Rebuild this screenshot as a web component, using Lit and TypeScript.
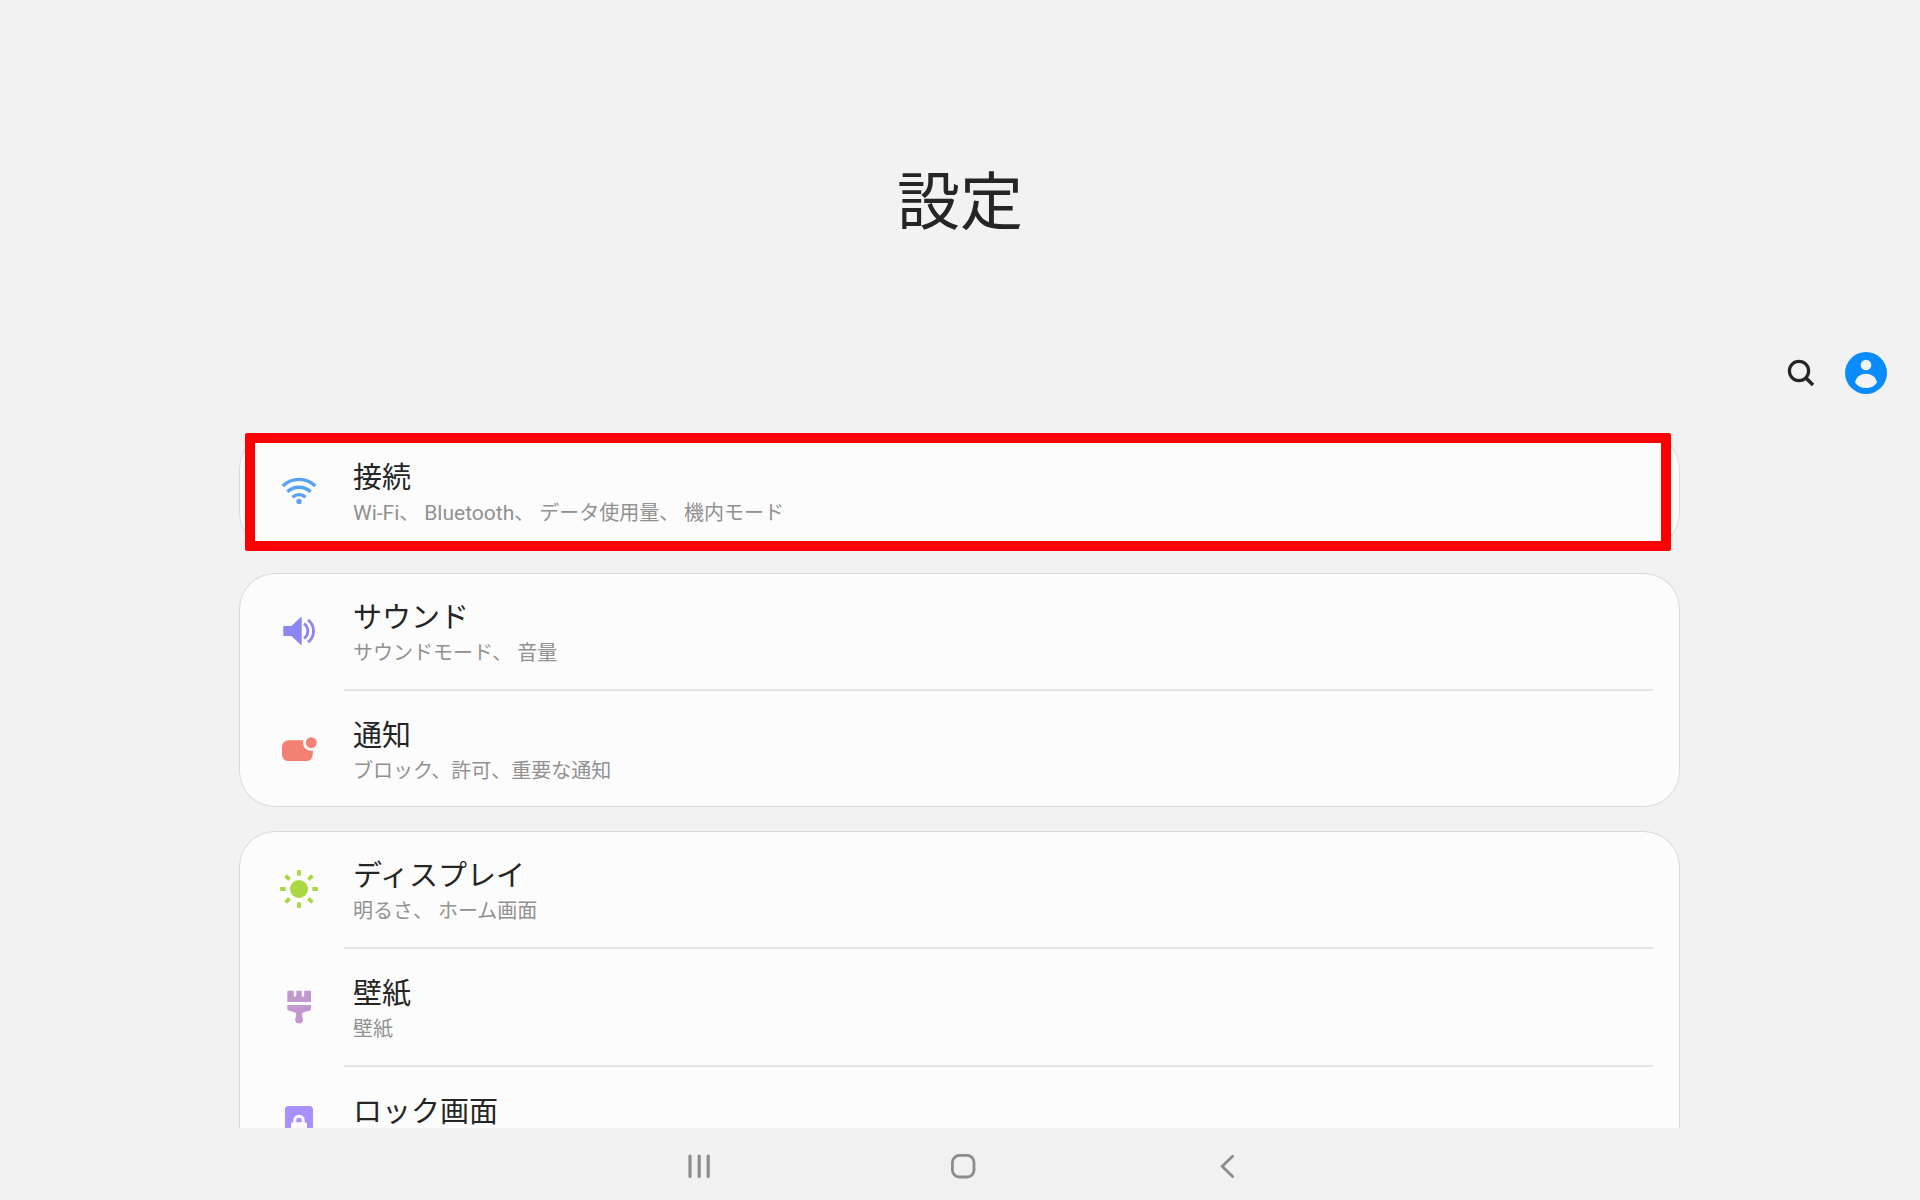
import { LitElement, html, css, svg, nothing } from "lit";
import { customElement, property } from "lit/decorators.js";

interface Item {
  id: string;
  title: string;
  detail: string;
}

interface Group {
  highlighted?: boolean;
  items: Item[];
}

const groups: Group[] = [
  {
    highlighted: true,
    items: [{ id: "wifi", title: "接続", detail: "Wi-Fi、 Bluetooth、 データ使用量、 機内モード" }],
  },
  {
    items: [
      { id: "sound", title: "サウンド", detail: "サウンドモード、 音量" },
      { id: "notice", title: "通知", detail: "ブロック、許可、重要な通知" },
    ],
  },
  {
    items: [
      { id: "display", title: "ディスプレイ", detail: "明るさ、 ホーム画面" },
      { id: "wallpaper", title: "壁紙", detail: "壁紙" },
      { id: "lock", title: "ロック画面", detail: "" },
    ],
  },
];

const icons: Record<string, unknown> = {
  wifi: svg`<g fill="none" stroke="#55a2fa" stroke-width="3.4">
      <path d="M3.8 15A23 23 0 0 1 36.2 15"/>
      <path d="M8.4 20.8A17 17 0 0 1 31.6 20.8"/>
      <path d="M13.5 26.2A9.5 9.5 0 0 1 26.5 26.2"/>
    </g><circle cx="20" cy="30.4" r="2.6" fill="#55a2fa"/>`,
  sound: svg`<path fill="#8c86f3" d="M5.2 15H12.4L22 5.9Q22.7 5.4 22.7 6.4V33.6Q22.7 34.6 22 34.1L12.4 25H5.2Q4.3 25 4.3 24.1V15.9Q4.3 15 5.2 15Z"/>
    <g fill="none" stroke="#8c86f3" stroke-width="2.8">
      <path d="M25 12.6Q28.8 15.4 28.8 20T25 27.4"/>
      <path d="M29 8.9Q34.5 13 34.5 20T29 31.1"/>
    </g>`,
  notice: svg`<rect x="3" y="11.3" width="30.8" height="20.8" rx="6.5" fill="#f28174"/>
    <circle cx="32.3" cy="13.6" r="8.4" fill="#fcfcfc"/>
    <circle cx="32.3" cy="13.6" r="5.4" fill="#f28174"/>`,
  display: svg`<circle cx="20" cy="20" r="9" fill="#a9d843"/>
    ${[0, 45, 90, 135, 180, 225, 270, 315].map(
      (a) => svg`<rect x="18.1" y="1.1" width="3.8" height="5.6" rx="0.4" fill="#a9d843" transform="rotate(${a} 20 20)"/>`
    )}`,
  wallpaper: svg`<path fill="#c297cd" d="M9.3 3.7H14.8V8.6Q14.8 9.8 16.1 9.8T17.3 8.6V3.7H22.7V8.6Q22.7 9.8 24 9.8T25.2 8.6V3.7H31Q32 3.7 32 4.7V15H8.3V4.7Q8.3 3.7 9.3 3.7Z"/>
    <path fill="#c297cd" d="M8.3 18H32V22.2Q32 23.1 31 23.4L24.8 25.2Q22.9 25.8 22.9 27.4C22.9 29.3 24 30.4 24 32.6A3.9 3.9 0 0 1 16.2 32.6C16.2 30.4 17.3 29.3 17.3 27.4Q17.3 25.8 15.4 25.2L9.3 23.4Q8.3 23.1 8.3 22.2Z"/>`,
  lock: svg`<rect x="6" y="1" width="28" height="38" rx="3.5" fill="#a891ff"/>
    <rect x="12" y="17.3" width="16" height="13" rx="1.6" fill="#fcfcfc"/>
    <path d="M15.8 18.5V15.4A4.2 4.2 0 0 1 24.2 15.4V18.5" fill="none" stroke="#fcfcfc" stroke-width="3"/>`,
};

/** Latin words are set one pixel larger than the Japanese text around them. */
const mixedText = (text: string) =>
  text
    .split(/([A-Za-z-]+)/)
    .map((part) => (/^[A-Za-z-]+$/.test(part) ? html`<span class="latin">${part}</span>` : part));

@customElement("settings-row")
class SettingsRow extends LitElement {
  @property({ attribute: false }) item!: Item;

  static styles = css`
    :host {
      display: block;
    }
    .row {
      display: flex;
      align-items: center;
      min-height: 116px;
      padding: 0 27px 0 40px;
      box-sizing: border-box;
      color: inherit;
      text-decoration: none;
    }
    .icon {
      flex: none;
      width: 40px;
      height: 40px;
      margin-right: 34px;
    }
    .text {
      padding-top: 8px;
      min-width: 0;
    }
    .title {
      font-size: 29px;
      line-height: 36px;
      color: #252525;
    }
    .detail {
      min-height: 34px;
      font-size: 20px;
      line-height: 34px;
      color: #919191;
    }
    .latin {
      font-size: 21px;
    }
  `;

  render() {
    const { id, title, detail } = this.item;
    return html`<a class="row" href="#${id}">
      <svg class="icon" viewBox="0 0 40 40" aria-hidden="true">${icons[id]}</svg>
      <div class="text">
        <div class="title">${title}</div>
        <div class="detail">${mixedText(detail)}</div>
      </div>
    </a>`;
  }
}

@customElement("app-root")
class AppRoot extends LitElement {
  static styles = css`
    :host {
      display: flex;
      flex-direction: column;
      height: 100vh;
      overflow: hidden;
      background: #f2f2f2;
      font-family: Roboto, "Noto Sans CJK JP", sans-serif;
      color: #252525;
    }
    button {
      display: flex;
      align-items: center;
      justify-content: center;
      padding: 0;
      border: 0;
      background: none;
    }
    .hero {
      display: flex;
      align-items: center;
      justify-content: center;
      flex: none;
      height: 330px;
      box-sizing: border-box;
      padding-top: 76px;
    }
    .heading {
      margin: 0;
      font-size: 63px;
      line-height: 80px;
      font-weight: 400;
    }
    .tools {
      display: flex;
      align-items: center;
      justify-content: flex-end;
      flex: none;
      gap: 22px;
      height: 86px;
      margin-bottom: 17px;
      padding-right: 33px;
    }
    .list {
      display: flex;
      flex-direction: column;
      flex: 1;
      gap: 24px;
      min-height: 0;
      overflow: hidden;
      padding: 0 240px 0 239px;
    }
    .card {
      position: relative;
      flex: none;
      border-radius: 36px;
      background: #fcfcfc;
      box-shadow: inset 0 0 0 1px #d9d9d9;
    }
    .divider {
      height: 2px;
      margin: 0 27px 0 105px;
      border: 0;
      background: #e4e4e4;
    }
    .marker {
      position: absolute;
      inset: 0 9px -2px 6px;
      border: 10px solid #ff0000;
      border-radius: 2px;
      pointer-events: none;
    }
    .nav {
      display: flex;
      justify-content: center;
      flex: none;
      height: 72px;
      padding: 4px 0 0 5px;
      box-sizing: border-box;
      background: #f1f1f1;
    }
    .key {
      width: 264px;
    }
  `;

  render() {
    return html`
      <header class="hero"><h1 class="heading">設定</h1></header>
      <div class="tools">
        <button aria-label="検索">
          <svg width="44" height="44" viewBox="0 0 44 44" fill="none" stroke="#252525" stroke-width="3.2">
            <circle cx="20" cy="20" r="9.6" />
            <path d="M26.8 26.8L34 34" stroke-width="3.6" />
          </svg>
        </button>
        <button aria-label="アカウント">
          <svg width="42" height="42" viewBox="0 0 42 42">
            <circle cx="21" cy="21" r="21" fill="#0a8cff" />
            <g fill="#f4f4f4">
              <circle cx="21" cy="13" r="5.3" />
              <path d="M21 21.7C27 21.7 31 25.6 32 30.4Q28 36 21 36T10 30.4C11 25.6 15 21.7 21 21.7Z" />
            </g>
          </svg>
        </button>
      </div>
      <main class="list">
        ${groups.map(
          (group) => html`<section class="card">
            ${group.items.map(
              (item, i) => html`${i ? html`<hr class="divider" />` : nothing}<settings-row .item=${item}></settings-row>`
            )}
            ${group.highlighted ? html`<div class="marker"></div>` : nothing}
          </section>`
        )}
      </main>
      <nav class="nav">
        <button class="key" aria-label="履歴">
          <svg width="28" height="28" viewBox="0 0 28 28" stroke="#8c8c8c" stroke-width="3.2" stroke-linecap="round">
            <path d="M5 4V24.4M14.2 4V24.4M23.2 4V24.4" />
          </svg>
        </button>
        <button class="key" aria-label="ホーム">
          <svg width="28" height="28" viewBox="0 0 28 28" fill="none" stroke="#8c8c8c" stroke-width="2.8">
            <rect x="3.4" y="3.4" width="21.6" height="21.6" rx="7" />
          </svg>
        </button>
        <button class="key" aria-label="戻る">
          <svg width="28" height="28" viewBox="0 0 28 28" fill="none" stroke="#8c8c8c" stroke-width="2.8" stroke-linecap="round">
            <path d="M19.6 4.2L9.2 14.3L19.6 24.4" />
          </svg>
        </button>
      </nav>
    `;
  }
}
